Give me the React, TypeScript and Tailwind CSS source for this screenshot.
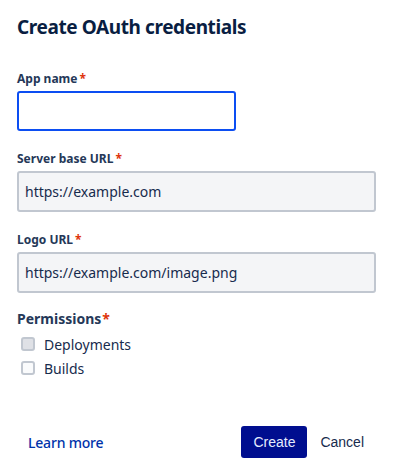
export default function App() {
  const font = { fontFamily: '"Noto Sans", "Open Sans", sans-serif' };
  return (
    <div className="min-h-[475px] w-[393px] bg-white px-[17px] pt-[14px] text-[#172b4d]" style={font}>
      <h1 className="text-[19px] font-bold leading-[26px] tracking-[-0.4px] text-[#091e42]">
        Create OAuth credentials
      </h1>

      <div className="mt-[31px]">
        <label className="flex text-[12px] font-bold leading-[16px] text-[#253858]">
          App name<span className="ml-[2px] text-[#de350b]">*</span>
        </label>
        <div className="mt-[4px] h-[40px] w-[219px] rounded-[3px] border-2 border-[#0c4ef2] bg-white" />
      </div>

      <div className="mt-[20px]">
        <label className="flex text-[12px] font-bold leading-[16px] text-[#253858]">
          Server base URL<span className="ml-[2px] text-[#de350b]">*</span>
        </label>
        <div className="mt-[4px] flex h-[41px] w-full items-center rounded-[3px] border-2 border-[#c1c7d0] bg-[#f4f5f7] px-[6px] text-[14px]">
          https://example.com
        </div>
      </div>

      <div className="mt-[20px]">
        <label className="flex text-[12px] font-bold leading-[16px] text-[#253858]">
          Logo URL<span className="ml-[2px] text-[#de350b]">*</span>
        </label>
        <div className="mt-[4px] flex h-[41px] w-full items-center rounded-[3px] border-2 border-[#c1c7d0] bg-[#f4f5f7] px-[6px] text-[14px]">
          https://example.com/image.png
        </div>
      </div>

      <div className="mt-[17px]">
        <label className="flex text-[14px] font-bold leading-[18px] text-[#253858]">
          Permissions<span className="ml-[1px] text-[#de350b]">*</span>
        </label>
        <div className="mt-[4px] flex flex-col">
          <div className="flex h-[24px] items-center pl-[4px] text-[14px] text-[#172b4d]">
            <span className="h-[14px] w-[14px] rounded-[3px] border-2 border-[#c1c7d0] bg-[#dfe1e6]" />
            <span className="ml-[9px]">Deployments</span>
          </div>
          <div className="flex h-[24px] items-center pl-[4px] text-[14px] text-[#172b4d]">
            <span className="h-[14px] w-[14px] rounded-[3px] border-2 border-[#c1c7d0] bg-[#fafbfc]" />
            <span className="ml-[9px]">Builds</span>
          </div>
        </div>
      </div>

      <div className="mt-[46px] flex items-center justify-between pl-[11px] pr-[12px]">
        <a className="text-[14px] font-medium tracking-[-0.2px] text-[#0033aa]">Learn more</a>
        <div className="flex items-center gap-[13px]" style={{ fontFamily: '"Liberation Sans", Arial, sans-serif' }}>
          <button className="h-[32px] w-[66px] rounded-[3px] bg-[#000e8f] text-[14px] text-[#e6ecff]">Create</button>
          <button className="text-[14px] text-[#172b4d]">Cancel</button>
        </div>
      </div>
    </div>
  );
}
